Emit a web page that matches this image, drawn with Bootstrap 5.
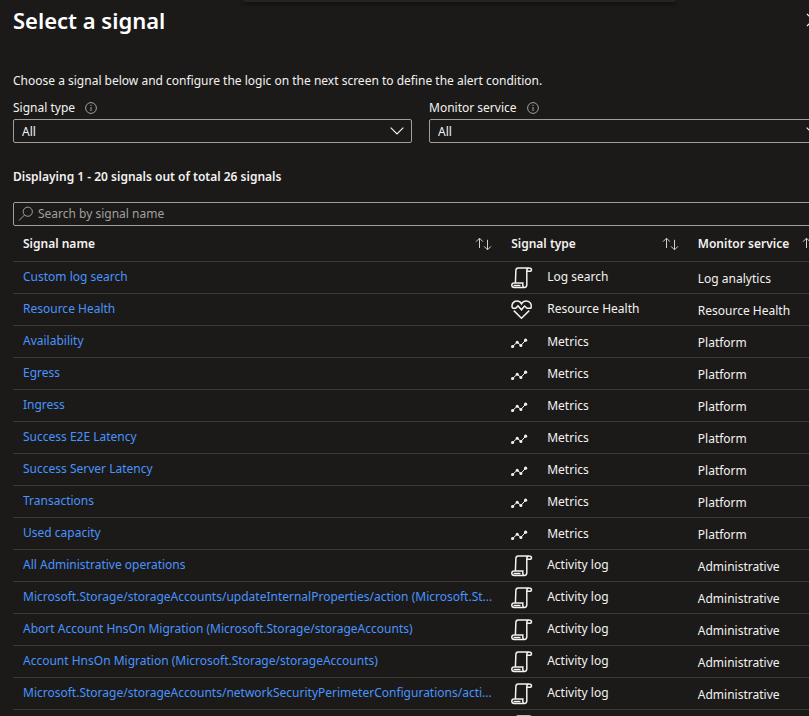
<!DOCTYPE html>
<html lang="en" data-bs-theme="dark">
<head>
<meta charset="utf-8">
<meta name="viewport" content="width=device-width, initial-scale=1">
<title>Select a signal</title>
<link href="https://cdn.jsdelivr.net/npm/bootstrap@5.3.0/dist/css/bootstrap.min.css" rel="stylesheet">
<style>
  body { background: #1b1a19; color: #f3f2f1; font: 12px/20px "Noto Sans", sans-serif; }
  .blade { height: 100vh; overflow: hidden; }
  /* the blade's content runs past the right edge of the window */
  .blade-body { margin: 0 -19px 0 13px; }
  .toast-edge { position: absolute; top: 0; left: 30%; width: 53.5%; height: 2px; background: #252423; border-radius: 0 0 2px 2px; box-shadow: 0 1px 5px #000; }
  .blade-title { font-size: 22px; line-height: 32px; font-weight: 600; }
  .close-btn { line-height: 0; color: #f3f2f1; }
  .intro { padding-top: 34px; margin-bottom: 7px; line-height: 22px; }
  .filters { --bs-gutter-x: 17px; }
  .filters label { line-height: 18px; }
  .field-head { display: flex; align-items: center; gap: 10px; margin-bottom: 2px; }
  .field-head svg { color: #a19f9d; }
  .field { height: 24px; min-height: 24px; border: 1px solid #a19f9d; border-radius: 2px; background-color: #1b1a19; color: #f3f2f1; font-size: 12px; line-height: 18px; }
  .filters .field { padding: 3px 28px 1px 8px; background-position: right 7px center; background-size: 14px 14px;
    background-image: url("data:image/svg+xml,%3Csvg xmlns='http://www.w3.org/2000/svg' viewBox='0 0 14 14' fill='none' stroke='%23f3f2f1' stroke-width='1.2'%3E%3Cpath d='M.7 3.7 7 10l6.3-6.3'/%3E%3C/svg%3E"); }
  .count { font-weight: 600; line-height: 20px; padding: 24px 0 15px; }
  .search .field { padding: 1px 8px 3px 24px; }
  .search .field::placeholder { color: #a19f9d; opacity: 1; }
  .search-icon { position: absolute; left: 5px; top: 4px; }
  .signals { table-layout: fixed; width: 100%; --bs-table-bg: transparent; --bs-table-color: #f3f2f1; }
  .signals > * > tr > * { height: 32px; padding: 0 0 0 10px; border-bottom: 1px solid #3b3a39; vertical-align: middle; white-space: nowrap; }
  .signals > thead > tr > * { height: 35px; padding: 2px 9px 0 10px; font-weight: 600; }
  .signals > tbody > tr > td:last-child { padding: 4px 0 0 10px; }
  .col-name { width: 59.9%; } .col-type { width: 22.9%; } .col-service { width: 17.2%; }
  .signals a { color: #4894fe; text-decoration: none; display: block; overflow: hidden; text-overflow: ellipsis; }
  .kind { display: flex; gap: 14px; }
  .kind svg { flex: none; margin-bottom: -2px; }
  .kind-metric { padding-top: 1px; }
  .sort { line-height: 0; color: #d2d0ce; }
  svg { fill: none; stroke: currentColor; }
</style>
<script src="https://cdn.jsdelivr.net/npm/bootstrap@5.3.0/dist/js/bootstrap.bundle.min.js"></script>
</head>
<body>
<svg class="d-none" aria-hidden="true">
  <symbol id="i-info" viewBox="0 0 12 12"><circle cx="6" cy="6" r="5.400"/><path d="M6 5v4M6 2.800v1.200"/></symbol>
  <symbol id="i-sort" viewBox="0 0 17 14"><path d="M4.500 11V1.200M1 4.700l3.500-3.500L8 4.700M12.500 2.800v10M9 9.300l3.500 3.500 3.500-3.500"/></symbol>
  <symbol id="i-log" viewBox="0 0 22 22"><path d="M4.400 15.800 4.900 3.200Q5 .9 7.200.9H18.500M15.800 17.800V3.200Q15.800.9 18 .9 20.500.9 20.500 2.700 20.500 4.300 18.600 4.300H15.800M15.800 17.800Q15.800 20.400 13.400 20.400H3.200Q.8 20.400.8 18.200.8 16 3 16H11.800Q11.400 20.400 13.400 20.400M2.600 18.400H9.500"/></symbol>
  <symbol id="i-heart" viewBox="0 0 22 22"><path d="M1.300 8.800C.2 5.300 2.500 1.900 5.800 1.900 8 1.900 9.600 3 10.500 4.800 11.400 3 13.200 1.900 15.400 1.900 19 1.900 21.200 5.500 19.800 9.300H16L13.500 7 10.500 10.800 7 6.900 4.700 9.300H1.200M2.800 11.600 10.500 19.200 18.200 11.600"/></symbol>
  <symbol id="i-metric" viewBox="0 0 22 22"><path d="M1.500 14.500 6.200 10.300 9.900 13.400 14.600 8.200"/><g fill="currentColor" stroke="none"><circle cx="1.600" cy="14.500" r="1.600"/><circle cx="6.200" cy="10.300" r="1.500"/><circle cx="9.900" cy="13.400" r="1.500"/><circle cx="14.600" cy="8.200" r="1.600"/></g></symbol>
</svg>
<main class="blade position-relative">
  <div class="toast-edge"></div>
  <div class="blade-body">
    <header class="d-flex justify-content-between align-items-center pt-1">
      <h1 class="blade-title m-0">Select a signal</h1>
      <button type="button" class="close-btn btn p-0 border-0 me-2" aria-label="Close"><svg width="14" height="14" viewBox="0 0 14 14" stroke-width="1.200"><path d="m1 1 12 12M13 1 1 13"/></svg></button>
    </header>
    <p class="intro">Choose a signal below and configure the logic on the next screen to define the alert condition.</p>
    <div class="row filters">
      <div class="col-6">
        <div class="field-head"><label for="type">Signal type</label><svg width="12" height="12"><use href="#i-info"/></svg></div>
        <select id="type" class="form-select field"><option>All</option></select>
      </div>
      <div class="col-6">
        <div class="field-head"><label for="service">Monitor service</label><svg width="12" height="12"><use href="#i-info"/></svg></div>
        <select id="service" class="form-select field"><option>All</option></select>
      </div>
    </div>
    <p class="count m-0">Displaying 1 - 20 signals out of total 26 signals</p>
    <div class="search position-relative">
      <svg class="search-icon" width="16" height="16" viewBox="0 0 16 16" color="#a19f9d"><circle cx="9.800" cy="5.700" r="4.600"/><path d="M6.500 9 1 14.500"/></svg>
      <input type="text" class="form-control field" placeholder="Search by signal name" aria-label="Search by signal name">
    </div>
    <table class="signals table mb-0">
      <thead><tr>
        <th class="col-name" scope="col"><div class="d-flex justify-content-between align-items-center">Signal name<button type="button" class="sort btn p-0 border-0" aria-label="Sort by name"><svg width="17" height="14"><use href="#i-sort"/></svg></button></div></th>
        <th class="col-type" scope="col"><div class="d-flex justify-content-between align-items-center">Signal type<button type="button" class="sort btn p-0 border-0" aria-label="Sort by type"><svg width="17" height="14"><use href="#i-sort"/></svg></button></div></th>
        <th class="col-service" scope="col"><div class="d-flex justify-content-between align-items-center">Monitor service<button type="button" class="sort btn p-0 border-0" aria-label="Sort by service"><svg width="17" height="14"><use href="#i-sort"/></svg></button></div></th>
      </tr></thead>
      <tbody>
        <tr><td><a href="#">Custom log search</a></td><td><div class="kind"><svg width="22" height="22" stroke-width="1.500"><use href="#i-log"/></svg>Log search</div></td><td>Log analytics</td></tr>
        <tr><td><a href="#">Resource Health</a></td><td><div class="kind"><svg width="22" height="22" stroke-width="1.500"><use href="#i-heart"/></svg>Resource Health</div></td><td>Resource Health</td></tr>
        <tr><td><a href="#">Availability</a></td><td><div class="kind kind-metric"><svg width="22" height="22"><use href="#i-metric"/></svg>Metrics</div></td><td>Platform</td></tr>
        <tr><td><a href="#">Egress</a></td><td><div class="kind kind-metric"><svg width="22" height="22"><use href="#i-metric"/></svg>Metrics</div></td><td>Platform</td></tr>
        <tr><td><a href="#">Ingress</a></td><td><div class="kind kind-metric"><svg width="22" height="22"><use href="#i-metric"/></svg>Metrics</div></td><td>Platform</td></tr>
        <tr><td><a href="#">Success E2E Latency</a></td><td><div class="kind kind-metric"><svg width="22" height="22"><use href="#i-metric"/></svg>Metrics</div></td><td>Platform</td></tr>
        <tr><td><a href="#">Success Server Latency</a></td><td><div class="kind kind-metric"><svg width="22" height="22"><use href="#i-metric"/></svg>Metrics</div></td><td>Platform</td></tr>
        <tr><td><a href="#">Transactions</a></td><td><div class="kind kind-metric"><svg width="22" height="22"><use href="#i-metric"/></svg>Metrics</div></td><td>Platform</td></tr>
        <tr><td><a href="#">Used capacity</a></td><td><div class="kind kind-metric"><svg width="22" height="22"><use href="#i-metric"/></svg>Metrics</div></td><td>Platform</td></tr>
        <tr><td><a href="#">All Administrative operations</a></td><td><div class="kind"><svg width="22" height="22" stroke-width="1.500"><use href="#i-log"/></svg>Activity log</div></td><td>Administrative</td></tr>
        <tr><td><a href="#">Microsoft.Storage/storageAccounts/updateInternalProperties/action (Microsoft.St...</a></td><td><div class="kind"><svg width="22" height="22" stroke-width="1.500"><use href="#i-log"/></svg>Activity log</div></td><td>Administrative</td></tr>
        <tr><td><a href="#">Abort Account HnsOn Migration (Microsoft.Storage/storageAccounts)</a></td><td><div class="kind"><svg width="22" height="22" stroke-width="1.500"><use href="#i-log"/></svg>Activity log</div></td><td>Administrative</td></tr>
        <tr><td><a href="#">Account HnsOn Migration (Microsoft.Storage/storageAccounts)</a></td><td><div class="kind"><svg width="22" height="22" stroke-width="1.500"><use href="#i-log"/></svg>Activity log</div></td><td>Administrative</td></tr>
        <tr><td><a href="#">Microsoft.Storage/storageAccounts/networkSecurityPerimeterConfigurations/acti...</a></td><td><div class="kind"><svg width="22" height="22" stroke-width="1.500"><use href="#i-log"/></svg>Activity log</div></td><td>Administrative</td></tr>
        <tr><td></td><td><div class="kind"><svg width="22" height="22" stroke-width="1.500"><use href="#i-log"/></svg></div></td><td></td></tr>
      </tbody>
    </table>
  </div>
</main>
</body>
</html>
